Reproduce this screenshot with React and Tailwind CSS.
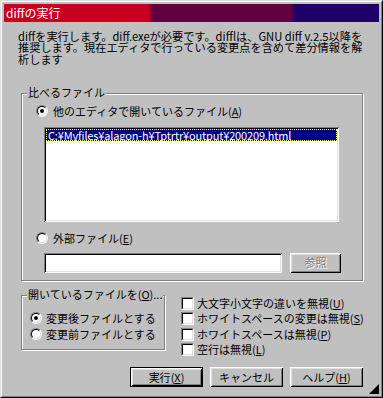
import React from "react";

const sunken =
  "shadow-[inset_1px_1px_0_#808080,inset_-1px_-1px_0_#fff,inset_2px_2px_0_#000,inset_-2px_-2px_0_#dfdfdf]";
const raised =
  "shadow-[inset_1px_1px_0_#fff,inset_-1px_-1px_0_#000,inset_2px_2px_0_#dfdfdf,inset_-2px_-2px_0_#808080]";
const etched =
  "border border-[#808080] shadow-[inset_1px_1px_0_#fff,1px_1px_0_#fff]";

function Radio({ checked }) {
  return (
    <span className="w-[12px] h-[12px] shrink-0 rounded-full border border-t-[#808080] border-l-[#808080] border-r-white border-b-white">
      <span className="w-full h-full rounded-full border border-t-black border-l-black border-r-[#dfdfdf] border-b-[#dfdfdf] bg-white flex items-center justify-center">
        {checked && <span className="w-[4px] h-[4px] rounded-full bg-black" />}
      </span>
    </span>
  );
}

function Check() {
  return (
    <span className="w-[13px] h-[13px] shrink-0 border border-t-[#808080] border-l-[#808080] border-r-white border-b-white">
      <span className="block w-full h-full border border-t-black border-l-black border-r-[#dfdfdf] border-b-[#dfdfdf] bg-white" />
    </span>
  );
}

function Key({ k }) {
  return (
    <>
      (<span className="underline underline-offset-1">{k}</span>)
    </>
  );
}

export default function App() {
  return (
    <div className="w-[383px] h-[398px] bg-[#c0c0c0] border border-t-[#dfdfdf] border-l-[#dfdfdf] border-r-black border-b-black font-['Noto_Sans_CJK_JP',sans-serif] text-black">
      <div className="h-full border border-t-white border-l-white border-r-[#808080] border-b-[#808080] p-[2px] flex flex-col">
        {/* title bar */}
        <div className="h-[18px] shrink-0 flex items-center pl-[2px] text-white text-[12px] leading-none bg-[linear-gradient(90deg,#c80020_144px,#64003f_149px,#64003f_286px,#1e0068_292px)]">
          diffの実行
        </div>

        <div className="relative flex-1 flex flex-col text-[11px] leading-[11.5px]">
          <div className="mt-[8.5px] pl-[14px] whitespace-nowrap text-[11.2px]">
            <div className="h-[11.5px]">diffを実行します。diff.exeが必要です。difflは、GNU diff v.2.5以降を</div>
            <div className="h-[11.5px]">推奨します。現在エディタで行っている変更点を含めて差分情報を解</div>
            <div className="h-[11.5px]">析します</div>
          </div>

          {/* 比べるファイル */}
          <div className={`relative ml-[17px] mt-[28px] w-[342px] h-[188px] shrink-0 ${etched}`}>
            <span className="absolute left-[5px] -top-[8px] px-[1px] bg-[#c0c0c0] leading-[12px]">
              比べるファイル
            </span>
            <div className="mt-[11px] ml-[14px] h-[12px] flex items-center gap-[5px] leading-[12px]">
              <Radio checked />
              <span>
                他のエディタで開いているファイル<Key k="A" />
              </span>
            </div>
            <div className={`mt-[10px] ml-[22px] w-[295px] h-[95px] bg-white p-[2px] ${sunken}`}>
              <div className="h-[12px] bg-[#000080] text-white border border-dotted border-[#ffff80] pl-[1px] leading-[10px] whitespace-nowrap tracking-[-0.15px]">
                C:¥Myfiles¥alagon-h¥Tptrtr¥output¥200209.html
              </div>
            </div>
            <div className="mt-[10px] ml-[14px] h-[12px] flex items-center gap-[5px] leading-[12px]">
              <Radio />
              <span>
                外部ファイル<Key k="E" />
              </span>
            </div>
            <div className="mt-[9px] ml-[22px] flex gap-[8px]">
              <div className={`w-[238px] h-[20px] bg-white ${sunken}`} />
              <button
                className={`w-[51px] h-[20px] flex items-center justify-center text-[#808080] [text-shadow:1px_1px_0_#fff] ${raised}`}
              >
                参照
              </button>
            </div>
          </div>

          {/* 開いているファイル + options */}
          <div className="mt-[14px] ml-[17px] h-[55px] shrink-0 flex items-start">
            <div className={`relative w-[144px] h-[55px] shrink-0 ${etched}`}>
              <span className="absolute left-[5px] -top-[8px] px-[1px] bg-[#c0c0c0] leading-[12px] whitespace-nowrap">
                開いているファイルを<Key k="O" />...
              </span>
              <div className="mt-[16px] ml-[8px] flex flex-col gap-[4px]">
                <div className="h-[12px] flex items-center gap-[4px] leading-[12px]">
                  <Radio checked />
                  <span>変更後ファイルとする</span>
                </div>
                <div className="h-[12px] flex items-center gap-[4px] leading-[12px]">
                  <Radio />
                  <span>変更前ファイルとする</span>
                </div>
              </div>
            </div>
            <div className="ml-[16px] mt-[1.5px] flex flex-col gap-[2.5px] leading-[13px]">
              <div className="h-[13px] flex items-center gap-[3px]">
                <Check />
                <span>
                  大文字小文字の違いを無視<Key k="U" />
                </span>
              </div>
              <div className="h-[13px] flex items-center gap-[3px]">
                <Check />
                <span>
                  ホワイトスペースの変更は無視<Key k="S" />
                </span>
              </div>
              <div className="h-[13px] flex items-center gap-[3px]">
                <Check />
                <span>
                  ホワイトスペースは無視<Key k="P" />
                </span>
              </div>
              <div className="h-[13px] flex items-center gap-[3px]">
                <Check />
                <span>
                  空行は無視<Key k="L" />
                </span>
              </div>
            </div>
          </div>

          {/* buttons */}
          <div className="mt-[17px] ml-[126px] flex gap-[7px] leading-[12px]">
            <button className={`w-[73px] h-[20px] flex items-center justify-center border border-black ${raised}`}>
              実行<Key k="X" />
            </button>
            <button className={`w-[73px] h-[20px] flex items-center justify-center ${raised}`}>
              キャンセル
            </button>
            <button className={`w-[73px] h-[20px] flex items-center justify-center ${raised}`}>
              ヘルプ<Key k="H" />
            </button>
          </div>

          {/* size grip */}
          <svg className="absolute right-0 bottom-0" width="10" height="10" viewBox="0 0 10 10">
            <polygon points="10,0 10,10 0,10" fill="#000" />
          </svg>
        </div>
      </div>
    </div>
  );
}
